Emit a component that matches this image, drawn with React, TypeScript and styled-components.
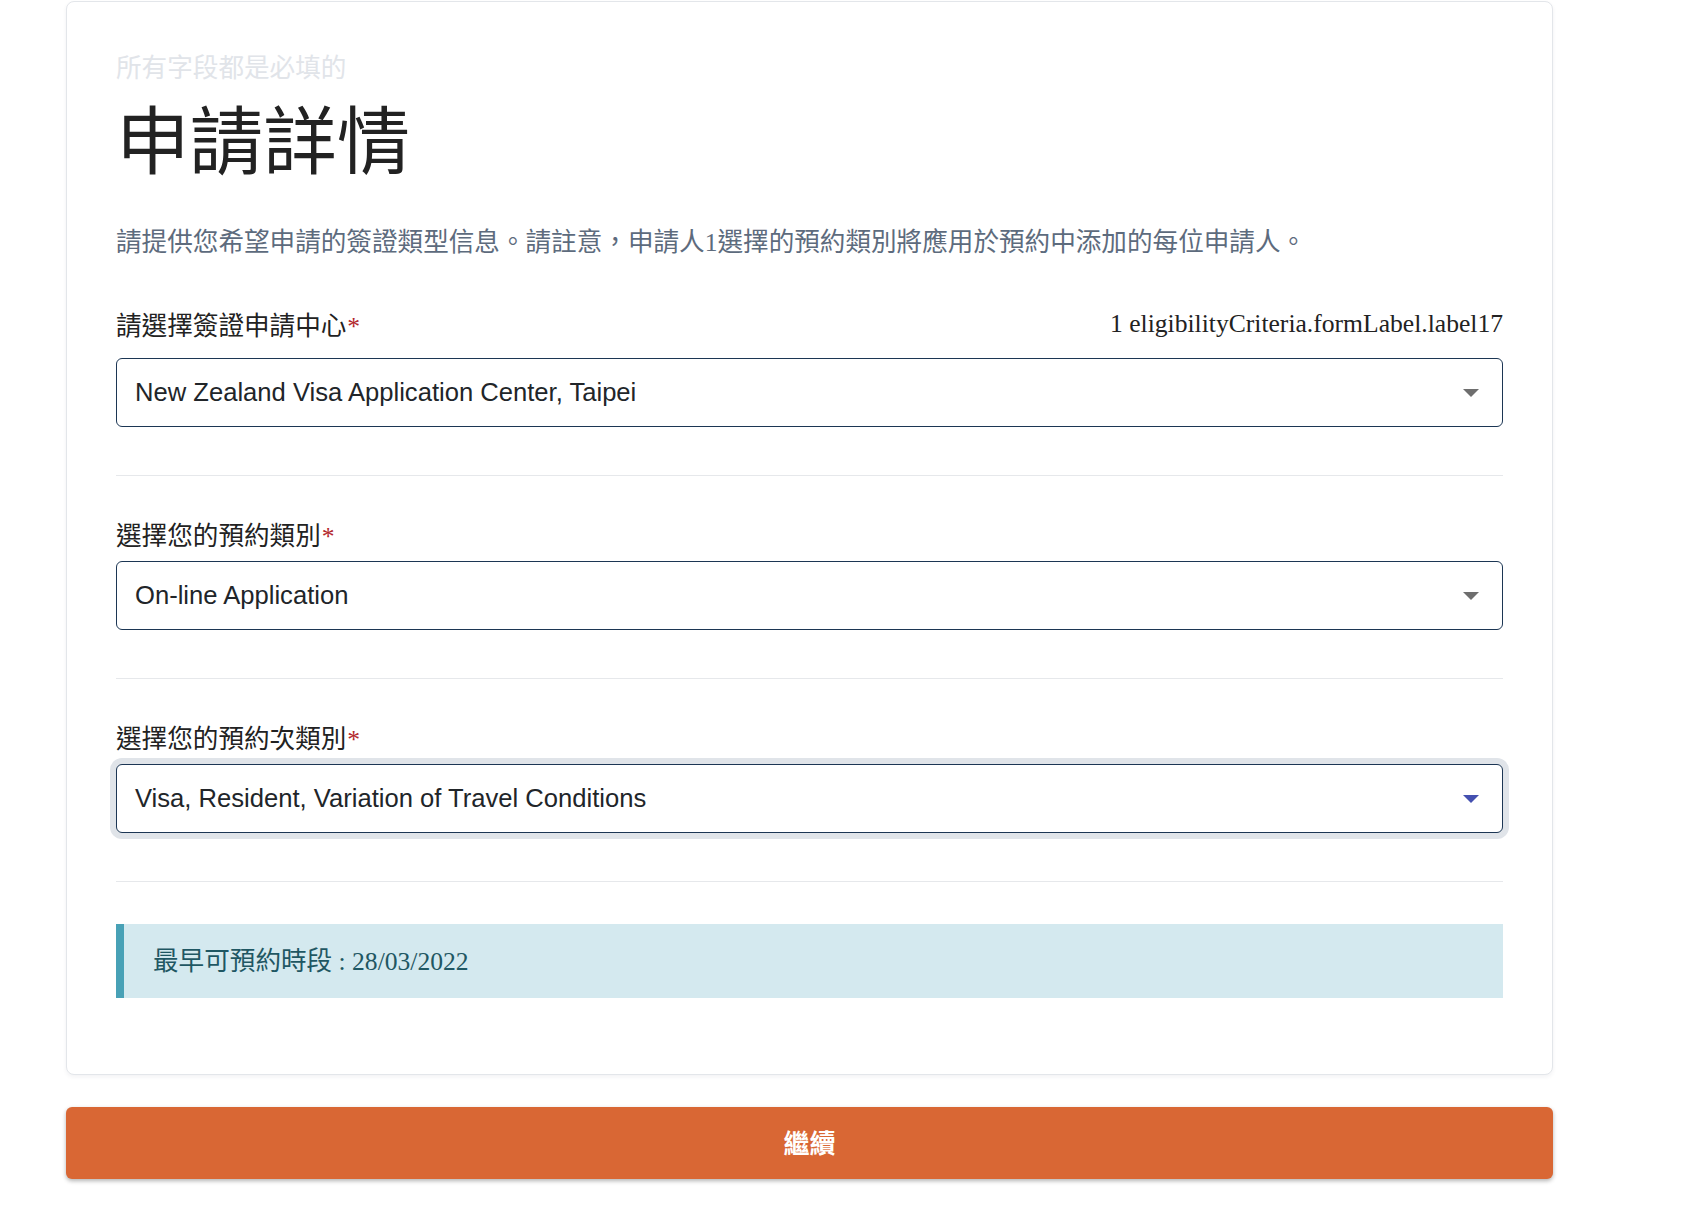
import React from 'react';
import styled, { createGlobalStyle } from 'styled-components';

const GlobalStyle = createGlobalStyle`
  html, body {
    margin: 0;
    padding: 0;
    background: #ffffff;
  }
  body {
    font-family: "Liberation Serif", "Noto Sans CJK TC", serif;
    color: #212529;
  }
  * {
    box-sizing: border-box;
  }
`;

const Page = styled.div`
  width: 1487px;
  margin-left: 66px;
  padding-top: 1px;
  padding-bottom: 50px;
`;

const Card = styled.section`
  background: #ffffff;
  border: 1px solid #e3e6ea;
  border-radius: 8px;
  box-shadow: 0 2px 4px rgba(30, 40, 60, 0.06);
  padding: 49px 49px 76px 49px;
`;

const Hint = styled.p`
  margin: 0 0 13px;
  font-size: 25.6px;
  line-height: 36px;
  color: #e1e4e9;
`;

const Title = styled.h1`
  margin: 0 0 38px;
  font-size: 73.6px;
  line-height: 86px;
  font-weight: 400;
  color: #222222;
`;

const Intro = styled.p`
  margin: 0 0 46px;
  font-size: 25.6px;
  line-height: 38px;
  color: #5d6b7d;
`;

const FormGroup = styled.div`
  padding-bottom: 48px;
  border-bottom: 1px solid #e6e8eb;
  margin-bottom: 42px;
`;

const LabelRow = styled.div<{ $gap: number }>`
  display: flex;
  justify-content: space-between;
  align-items: center;
  margin-bottom: ${({ $gap }) => $gap}px;
`;

const Label = styled.label`
  font-size: 25.6px;
  line-height: 38px;
  color: #222222;
`;

const Required = styled.span`
  color: #b3262c;
  margin-left: 1px;
`;

const SideNote = styled.span`
  font-size: 25.6px;
  line-height: 38px;
  color: #222222;
  transform: translateY(-3px);
`;

const Select = styled.div<{ $focused?: boolean }>`
  display: flex;
  align-items: center;
  justify-content: space-between;
  height: 69px;
  padding: 0 23px 0 18px;
  border: 1px solid #1c3654;
  border-radius: 6px;
  background: #ffffff;
  font-family: "Liberation Sans", Arial, sans-serif;
  font-size: 25.6px;
  color: #212529;
  box-shadow: ${({ $focused }) => ($focused ? '0 0 0 6px #e0e4e9' : 'none')};
`;

const Caret = styled.svg`
  width: 16px;
  height: 8px;
  flex-shrink: 0;
`;

const Notice = styled.div`
  display: flex;
  align-items: center;
  height: 74px;
  margin-top: 4px;
  padding: 0 0 5px 29px;
  border-left: 8px solid #48a1b6;
  background: #d4e9ef;
  font-size: 25.6px;
  color: #1f5763;
`;

const ContinueButton = styled.button`
  display: block;
  width: 100%;
  height: 72px;
  margin-top: 32px;
  padding: 0 0 3px;
  border: none;
  border-radius: 6px;
  background: #d96734;
  box-shadow: 0 2px 4px rgba(0, 0, 0, 0.3);
  color: #ffffff;
  font-family: "Noto Sans CJK TC", sans-serif;
  font-size: 26px;
  font-weight: 700;
  cursor: pointer;
`;

interface Field {
  label: string;
  value: string;
  note?: string;
  focused?: boolean;
}

const fields: Field[] = [
  {
    label: '請選擇簽證申請中心',
    value: 'New Zealand Visa Application Center, Taipei',
    note: '1 eligibilityCriteria.formLabel.label17',
  },
  { label: '選擇您的預約類別', value: 'On-line Application' },
  {
    label: '選擇您的預約次類別',
    value: 'Visa, Resident, Variation of Travel Conditions',
    focused: true,
  },
];

const App: React.FC = () => {
  return (
    <>
      <GlobalStyle />
      <Page>
        <Card>
          <Hint>所有字段都是必填的</Hint>
          <Title>申請詳情</Title>
          <Intro>
            請提供您希望申請的簽證類型信息。請註意，申請人1選擇的預約類別將應用於預約中添加的每位申請人。
          </Intro>

          {fields.map((field, i) => (
            <FormGroup key={field.label}>
              <LabelRow $gap={i === 0 ? 12 : 5}>
                <Label>
                  {field.label}
                  <Required>*</Required>
                </Label>
                {field.note && <SideNote>{field.note}</SideNote>}
              </LabelRow>
              <Select $focused={field.focused}>
                <span>{field.value}</span>
                <Caret viewBox="0 0 16 8">
                  <path d="M0 0 L16 0 L8 8 Z" fill={field.focused ? '#4450b0' : '#6e6e6e'} />
                </Caret>
              </Select>
            </FormGroup>
          ))}

          <Notice>最早可預約時段 : 28/03/2022</Notice>
        </Card>
        <ContinueButton type="button">繼續</ContinueButton>
      </Page>
    </>
  );
};

export default App;
